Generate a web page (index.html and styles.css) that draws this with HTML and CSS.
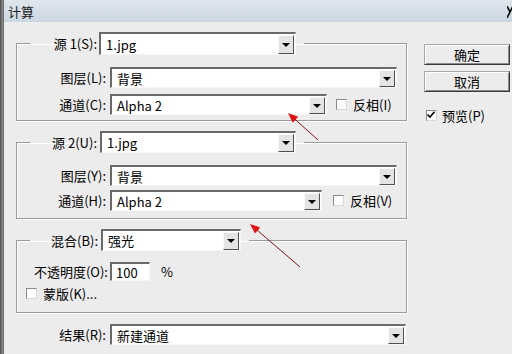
FILE: index.html
```html
<!DOCTYPE html>
<html lang="zh">
<head>
<meta charset="utf-8">
<title>计算</title>
<link rel="stylesheet" href="styles.css">
</head>
<body>
<div class="screen">
  <div class="edge"></div>
  <div class="dialog">
    <div class="titlebar"><span class="title">计算</span><svg class="close" width="6" height="12" viewBox="0 0 6 12"><path d="M0 0 L3 6 L0 12 M6 0 L3 6" fill="none" stroke="#000" stroke-width="1.6"/></svg></div>
    <div class="content">
      <div class="main">
        <fieldset class="group g1">
          <legend class="legend">
            <span class="lbl lw-src">源 1(S):</span>
            <div class="select sel-src"><span class="val">1.jpg</span><span class="dd"></span></div>
          </legend>
          <div class="row r-first">
            <span class="lbl lw-row">图层(L):</span>
            <div class="select sel-layer"><span class="val">背景</span><span class="dd"></span></div>
          </div>
          <div class="row r-next">
            <span class="lbl lw-row">通道(C):</span>
            <div class="select sel-ch1"><span class="val">Alpha 2</span><span class="dd"></span></div>
            <span class="cb cb-inv1"></span><span class="cbtext">反相(I)</span>
          </div>
        </fieldset>

        <fieldset class="group g2">
          <legend class="legend">
            <span class="lbl lw-src">源 2(U):</span>
            <div class="select sel-src2"><span class="val">1.jpg</span><span class="dd"></span></div>
          </legend>
          <div class="row r-first">
            <span class="lbl lw-row">图层(Y):</span>
            <div class="select sel-layer"><span class="val">背景</span><span class="dd"></span></div>
          </div>
          <div class="row r-next">
            <span class="lbl lw-row">通道(H):</span>
            <div class="select sel-ch2"><span class="val">Alpha 2</span><span class="dd"></span></div>
            <span class="cb cb-inv2"></span><span class="cbtext">反相(V)</span>
          </div>
        </fieldset>

        <fieldset class="group g3">
          <legend class="legend">
            <span class="lbl lw-blend">混合(B):</span>
            <div class="select sel-blend"><span class="val">强光</span><span class="dd"></span></div>
          </legend>
          <div class="row r-opacity">
            <span class="lbl lw-op">不透明度(O):</span>
            <div class="input"><span class="val">100</span></div>
            <span class="pct">%</span>
          </div>
          <div class="row r-mask">
            <span class="cb cb-mask"></span><span class="cbtext">蒙版(K)...</span>
          </div>
        </fieldset>

        <div class="row r-result">
          <span class="lbl lw-res">结果(R):</span>
          <div class="select sel-res"><span class="val">新建通道</span><span class="dd"></span></div>
        </div>
      </div>

      <div class="side">
        <div class="button b-ok">确定</div>
        <div class="button b-cancel">取消</div>
        <div class="preview">
          <span class="cb checked"><svg viewBox="0 0 10 10" width="10" height="10"><path d="M1.5 4.5 L4 7 L8.5 1.8" fill="none" stroke="#000" stroke-width="1.6"/></svg></span>
          <span class="cbtext">预览(P)</span>
        </div>
      </div>
    </div>
  </div>
  <svg class="arrows" width="512" height="354" viewBox="0 0 512 354">
    <line x1="318" y1="140" x2="293" y2="117.5" stroke="#7d1414" stroke-width="1"/>
    <polygon points="288,113 298.1,116.7 292.8,122.7" fill="#e01010"/>
    <line x1="300" y1="267" x2="255" y2="228.3" stroke="#7d1414" stroke-width="1"/>
    <polygon points="250,224 260.2,227.5 255,233.6" fill="#e01010"/>
  </svg>
</div>
</body>
</html>
```

FILE: styles.css
```css
html, body {
  margin: 0;
  padding: 0;
  background: #ececec;
}

.screen {
  position: relative;
  display: flex;
  width: 512px;
  height: 354px;
  overflow: hidden;
  font-family: "Noto Sans CJK SC", "Liberation Sans", sans-serif;
  font-size: 13px;
  line-height: 15px;
  color: #000;
}

.edge {
  width: 4px;
  flex: none;
  background: linear-gradient(90deg, #4a4a4a, #8a8a8a 60%, #5c5c5c);
}

.dialog {
  flex: 1;
  display: flex;
  flex-direction: column;
  background: #ececec;
}

.titlebar {
  height: 22px;
  flex: none;
  display: flex;
  align-items: center;
  justify-content: space-between;
  background: linear-gradient(#dfe6ee, #ccd7e2);
  overflow: hidden;
}

.title {
  padding-left: 4px;
  color: #222;
}

.close {
  flex: none;
  margin-right: -1px;
  margin-top: 2px;
}

.content {
  display: flex;
  padding-top: 10px;
}

.main {
  margin-left: 12px;
  width: 391px;
  display: flex;
  flex-direction: column;
}

.group {
  margin: 0;
  padding: 0;
  min-width: 0;
  border: 1px solid #9a9a9a;
  box-shadow: 1px 1px 0 #fff, inset 1px 1px 0 #fff;
}

.g2, .g3 {
  margin-top: 10px;
}

.legend {
  display: flex;
  align-items: center;
  padding: 0 8px 0 0;
  margin-left: 13px;
}

.row {
  display: flex;
  align-items: center;
}

.lbl {
  text-align: right;
  flex: none;
  white-space: nowrap;
}

.lw-src { width: 67px; margin-right: 2px; }
.g2 .lw-src { margin-right: 3px; }
.lw-row { width: 89px; margin-right: 4px; }
.lw-blend { width: 68px; margin-right: 3px; }
.lw-op { width: 91px; margin-right: 2px; }
.lw-res { width: 90px; margin-right: 4px; }

.select {
  box-sizing: border-box;
  display: flex;
  align-items: center;
  height: 21px;
  background: #fff;
  border-style: solid;
  border-width: 2px 1px 1px 2px;
  border-color: #6a6a6a #f6f6f6 #f6f6f6 #6a6a6a;
  flex: none;
}

.select .val {
  flex: 1;
  padding-left: 5px;
  white-space: nowrap;
}

.dd {
  box-sizing: border-box;
  width: 16px;
  height: 17px;
  margin-right: 1px;
  background: #e4e4e4;
  border: 1px solid;
  border-color: #fafafa #505050 #505050 #fafafa;
  display: flex;
  align-items: center;
  justify-content: center;
}

.dd::after {
  content: "";
  border-left: 4px solid transparent;
  border-right: 4px solid transparent;
  border-top: 4px solid #000;
  margin-top: 1px;
}

.sel-src { width: 197px; height: 23px; }
.sel-src .dd { height: 19px; }
.sel-src2 { width: 196px; height: 22px; }
.sel-src2 .dd { height: 18px; }
.sel-layer { width: 287px; }
.sel-ch1 { width: 217px; }
.sel-ch2 { width: 212px; }
.sel-blend { width: 140px; height: 22px; }
.sel-blend .dd { height: 18px; }
.sel-res { width: 296px; }

.r-first { margin-top: 12px; }
.r-next { margin-top: 6px; margin-bottom: 5px; }
.g2 .r-next { margin-top: 4px; margin-bottom: 7px; }

.cb {
  box-sizing: border-box;
  width: 11px;
  height: 11px;
  flex: none;
  background: #fdfdfd;
  border: 1px solid;
  border-color: #8a8a8a #d8d8d8 #d8d8d8 #8a8a8a;
  display: flex;
}

.cb svg { margin: -1px 0 0 -1px; }

.cbtext {
  margin-left: 6px;
  white-space: nowrap;
}

.cb-inv1 { margin-left: 9px; }
.cb-inv2 { margin-left: 11px; }

.r-opacity { margin-top: 11px; }

.input {
  box-sizing: border-box;
  width: 40px;
  height: 19px;
  background: #fff;
  border-style: solid;
  border-width: 2px 1px 1px 2px;
  border-color: #6a6a6a #f6f6f6 #f6f6f6 #6a6a6a;
  display: flex;
  align-items: center;
}

.input .val { padding-left: 4px; }

.pct { margin-left: 11px; }

.r-mask { margin-top: 5px; margin-bottom: 11px; }
.cb-mask { margin-left: 9px; }

.r-result { margin-top: 11px; }

.side {
  margin-left: 17px;
  width: 86px;
  display: flex;
  flex-direction: column;
  padding-top: 12px;
}

.button {
  box-sizing: border-box;
  height: 21px;
  display: flex;
  align-items: center;
  justify-content: center;
  background: #ececec;
  border: 1px solid;
  border-color: #a8a8a8 #3a3a3a #3a3a3a #a8a8a8;
  box-shadow: inset 1px 1px 0 #fff, inset -1px -1px 0 #8a8a8a;
}

.b-cancel { margin-top: 6px; }

.preview {
  display: flex;
  align-items: center;
  margin-top: 16px;
  margin-left: 2px;
}

.preview .cbtext { margin-left: 5px; }

.arrows {
  position: absolute;
  left: 0;
  top: 0;
  pointer-events: none;
}
```
